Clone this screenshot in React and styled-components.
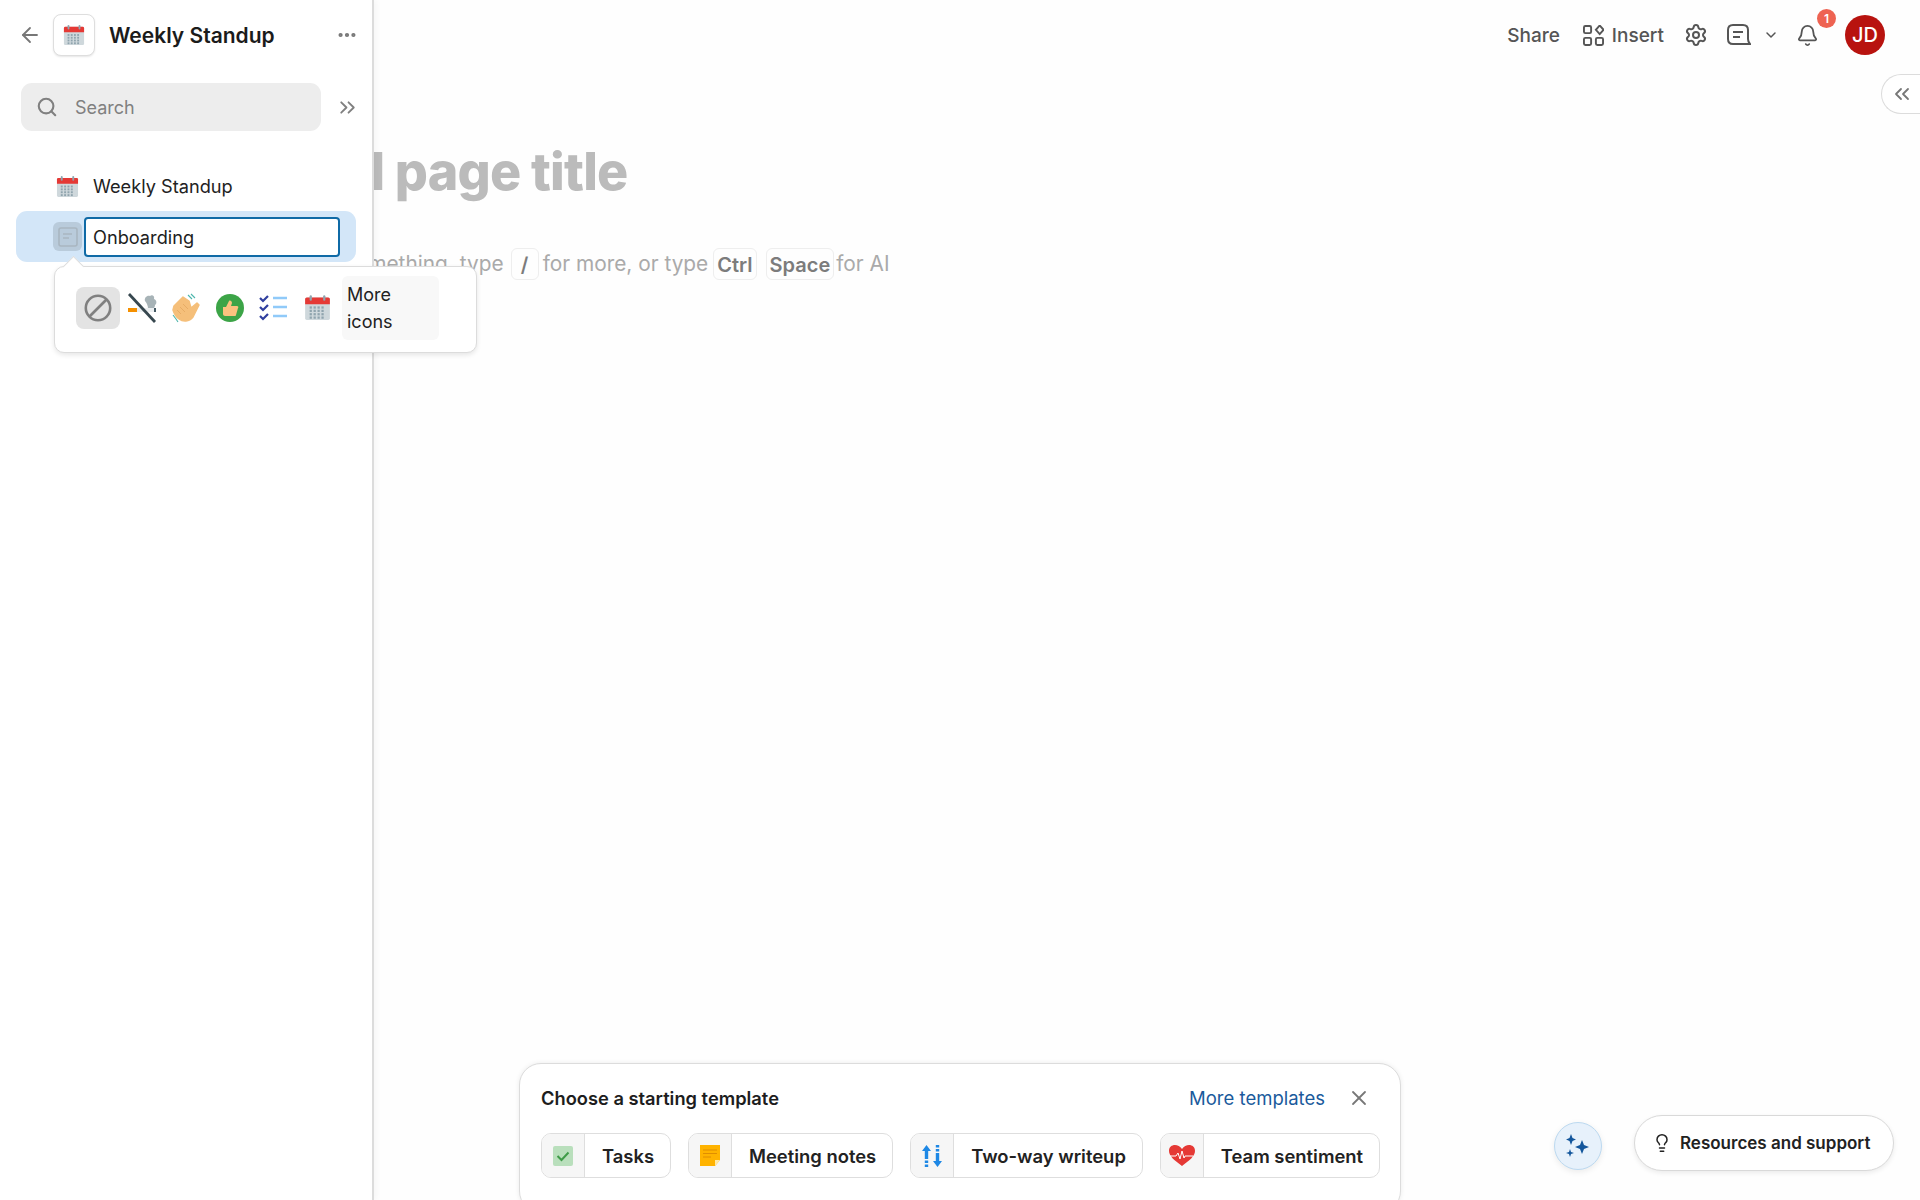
import React from "react";
import styled, { createGlobalStyle } from "styled-components";
import { ArrowLeft, Bell, ChevronDown, ChevronsLeft, ChevronsRight, Ellipsis, Lightbulb, Search, Settings, X } from "lucide-react";

const Global = createGlobalStyle`
  html, body { margin: 0; padding: 0; background: #fefefe; }
  body { font-family: Inter, "Noto Sans", sans-serif; color: #1d1d1d; }
  * { box-sizing: border-box; }
`;

const Page = styled.div`
  display: flex;
  width: 100%;
  height: 100vh;
  overflow: hidden;
  position: relative;
`;

const Sidebar = styled.aside`
  width: 374px;
  flex: none;
  background: #fff;
  border-right: 2px solid #dcdcdc;
  box-shadow: 2px 0 6px rgba(0, 0, 0, 0.04);
  position: relative;
  z-index: 2;
  padding: 14px 16px 0;
`;

const SideHeader = styled.div`
  display: flex;
  align-items: center;
  height: 42px;
  padding: 0 0 0 2px;
  color: #777;
`;

const HeaderIcon = styled.div`
  width: 42px;
  height: 42px;
  margin-left: 11px;
  border: 1px solid #dedede;
  border-radius: 8px;
  background: #fff;
  box-shadow: 0 1px 2px rgba(0, 0, 0, 0.1);
  display: flex;
  align-items: center;
  justify-content: center;
`;

const PageName = styled.div`
  flex: 1;
  margin-left: 14px;
  font-size: 21px;
  font-weight: 600;
  color: #1b1b1b;
`;

const DotsWrap = styled.div`
  display: flex;
  margin-right: -2px;
  color: #777;
`;

const SearchRow = styled.div`
  display: flex;
  align-items: center;
  margin-top: 27px;
  padding-left: 5px;
`;

const SearchBox = styled.div`
  width: 300px;
  height: 48px;
  flex: none;
  border-radius: 11px;
  background: #ededed;
  display: flex;
  align-items: center;
  padding-left: 15px;
  gap: 17px;
  color: #808080;
  font-size: 18px;
`;

const ExpandBtn = styled.div`
  display: flex;
  flex: none;
  margin-left: 14px;
  color: #808080;
`;

const Tree = styled.div`
  margin-top: 32px;
`;

const TreeRow = styled.div`
  display: flex;
  align-items: center;
  height: 46px;
  padding-left: 40px;
  gap: 14px;
  font-size: 18.2px;
  color: #222;
`;

const ActiveRow = styled.div`
  position: relative;
  display: flex;
  align-items: center;
  height: 51px;
  margin-top: 2px;
  width: 340px;
  border-radius: 11px;
  background: #d3e6f8;
  padding-left: 37px;
`;

const IconSlot = styled.div`
  width: 29px;
  height: 29px;
  border-radius: 6px;
  background: #b9cbdb;
  display: flex;
  align-items: center;
  justify-content: center;
  flex: none;
`;

const NameInput = styled.div`
  width: 256px;
  height: 40px;
  margin-left: 2px;
  background: #fff;
  border: 2px solid #0f6aa6;
  border-radius: 4px;
  display: flex;
  align-items: center;
  padding-left: 7px;
  font-size: 18.2px;
  color: #1d1d1d;
`;

const Popover = styled.div`
  position: absolute;
  top: 55px;
  left: 38px;
  width: 423px;
  height: 87px;
  background: #fff;
  border: 1px solid #dcdcdc;
  border-radius: 10px;
  box-shadow: 0 2px 5px rgba(0, 0, 0, 0.1);
  display: flex;
  align-items: center;
  padding: 0 0 4px 21px;

  &::before {
    content: "";
    position: absolute;
    top: -8px;
    left: 11px;
    width: 14px;
    height: 14px;
    background: #fff;
    border-left: 1px solid #dcdcdc;
    border-top: 1px solid #dcdcdc;
    transform: rotate(45deg);
  }
`;

const IconChoice = styled.div`
  width: ${(p) => p.$w || 44}px;
  height: 42px;
  flex: none;
  display: flex;
  align-items: center;
  justify-content: center;
  border-radius: 8px;
  background: ${(p) => (p.$on ? "#e3e3e3" : "transparent")};
`;

const MoreIcons = styled.div`
  width: 97px;
  height: 64px;
  margin-left: 3px;
  background: #f8f8f8;
  border-radius: 6px;
  padding-left: 5px;
  font-size: 18px;
  line-height: 27px;
  color: #222;
  display: flex;
  align-items: center;
`;

const Main = styled.main`
  flex: 1;
  min-width: 0;
  display: flex;
  flex-direction: column;
  overflow: hidden;
`;

const TopBar = styled.div`
  display: flex;
  align-items: center;
  justify-content: flex-end;
  height: 70px;
  padding-right: 35px;
  color: #555;
  font-size: 19px;
  font-weight: 500;
  flex: none;
`;

const TopItem = styled.div`
  display: flex;
  align-items: center;
  gap: ${(p) => p.$gap || 0}px;
  margin-left: ${(p) => p.$ml || 0}px;
  position: relative;
`;

const Badge = styled.span`
  position: absolute;
  top: -15px;
  right: -17px;
  width: 19px;
  height: 19px;
  border-radius: 50%;
  background: #ee6352;
  color: #fff;
  font-size: 12px;
  font-weight: 600;
  display: flex;
  align-items: center;
  justify-content: center;
`;

const Avatar = styled.div`
  width: 40px;
  height: 40px;
  border-radius: 50%;
  background: #b8130f;
  color: #fff;
  font-size: 20px;
  font-weight: 500;
  margin-left: 26px;
  display: flex;
  align-items: center;
  justify-content: center;
`;

const CollapseTab = styled.div`
  position: absolute;
  top: 74px;
  right: -1px;
  width: 40px;
  height: 40px;
  border: 1px solid #dcdcdc;
  border-right: none;
  border-radius: 20px 0 0 20px;
  background: #fff;
  color: #777;
  display: flex;
  align-items: center;
  justify-content: center;
`;

const Editor = styled.div`
  margin-left: -86px;
  white-space: nowrap;
  flex: 1;
`;

const Title = styled.div`
  margin: 70px 0 0 -6px;
  font-size: 52px;
  line-height: 64px;
  font-weight: 800;
  letter-spacing: -0.8px;
  color: #bbb;
`;

const Hint = styled.div`
  margin: 43px 0 0 -1px;
  display: flex;
  align-items: center;
  font-size: 20.85px;
  color: #aaa;
  height: 32px;
`;

const Key = styled.span`
  height: 32px;
  padding: 2px 3px 0;
  min-width: 28px;
  margin: 2px ${(p) => p.$mr ?? 4}px 0 ${(p) => p.$ml ?? 7}px;
  border: 1px solid #eee;
  border-radius: 6px;
  color: #7c7c7c;
  font-size: 20px;
  font-weight: 600;
  display: flex;
  align-items: center;
  justify-content: center;
`;

const Footer = styled.div`
  flex: none;
  display: flex;
  align-items: flex-end;
  padding-left: 145px;
  height: 137px;
`;

const TemplateCard = styled.div`
  width: 882px;
  height: 150px;
  margin-bottom: -13px;
  flex: none;
  background: #fff;
  border: 1px solid #dcdcdc;
  border-radius: 22px;
  box-shadow: 0 0 5px rgba(0, 0, 0, 0.08);
  padding: 20px 21px 0;
`;

const CardHead = styled.div`
  display: flex;
  align-items: center;
  height: 28px;
  font-size: 18.3px;
  font-weight: 600;
`;

const CardTitle = styled.div`
  flex: 1;
`;

const MoreLink = styled.div`
  color: #1a5a9c;
  font-size: 18.5px;
  font-weight: 400;
`;

const CloseBtn = styled.div`
  display: flex;
  color: #777;
  margin: 0 8px 0 22px;
`;

const Templates = styled.div`
  display: flex;
  gap: 17px;
  margin-top: 21px;
`;

const TemplateBtn = styled.div`
  display: flex;
  flex: none;
  height: 45px;
  border: 1px solid #dedede;
  border-radius: 10px;
  overflow: hidden;
  background: #fff;
  font-size: 18.4px;
  font-weight: 600;
  color: #222;
  white-space: nowrap;
`;

const TemplateIcon = styled.div`
  width: 43px;
  flex: none;
  background: #f6f6f6;
  border-right: 1px solid #dedede;
  display: flex;
  align-items: center;
  justify-content: center;
`;

const TemplateLabel = styled.div`
  display: flex;
  align-items: center;
  padding: 0 16px 0 17px;
`;

const AiButton = styled.div`
  width: 48px;
  height: 48px;
  flex: none;
  margin: 0 0 30px 153px;
  border-radius: 50%;
  background: #e7f1fb;
  border: 1px solid #bcd9f0;
  box-shadow: 0 2px 6px rgba(0, 0, 0, 0.08);
  display: flex;
  align-items: center;
  justify-content: center;
`;

const HelpButton = styled.div`
  margin: 0 0 29px 32px;
  width: 260px;
  height: 56px;
  flex: none;
  border: 1px solid #d9d9d9;
  border-radius: 28px;
  background: #fff;
  box-shadow: 0 2px 5px rgba(0, 0, 0, 0.08);
  display: flex;
  align-items: center;
  padding-left: 17px;
  gap: 8px;
  font-size: 17px;
  font-weight: 600;
  color: #222;
`;

const Calendar = ({ size = 24 }) => (
  <svg width={size} height={size} viewBox="0 0 24 24">
    <rect x="1" y="3" width="22" height="20" rx="1.5" fill="#cfd8dc" />
    <path d="M1 9V4.5A1.5 1.5 0 0 1 2.500 3h19A1.500 1.500 0 0 1 23 4.500V9z" fill="#e53935" />
    <rect x="5" y="1" width="2" height="5" rx="1" fill="#90a4ae" />
    <rect x="17" y="1" width="2" height="5" rx="1" fill="#90a4ae" />
    {[11, 14, 17, 20].map((y) =>
      [5, 8.500, 12, 15.500].map((x) => <rect key={x + "-" + y} x={x} y={y} width="2" height="2" fill="#90a4ae" />)
    )}
  </svg>
);

const NoteOutline = () => (
  <svg width="22" height="22" viewBox="0 0 22 22" fill="none" stroke="#a9b6c1" strokeWidth="1.600">
    <rect x="2" y="2" width="18" height="18" rx="2" />
    <path d="M6 8h9M6 12h6" />
  </svg>
);

const NoIcon = () => (
  <svg width="28" height="28" viewBox="0 0 28 28" fill="none" stroke="#808080" strokeWidth="2.600">
    <circle cx="14" cy="14" r="12.200" />
    <path d="M5.500 22.500L22.500 5.500" />
  </svg>
);

const NoSmoking = () => (
  <svg width="30" height="30" viewBox="0 0 30 30">
    <path d="M18 8c-1-3 2-6 5-5 2-2 5 0 4 3 3 1 3 5 1 6 0 2-1 3-2 4h-5c0-3-1-6-3-8z" fill="#a7b3b7" />
    <rect x="1" y="15" width="9" height="4" fill="#f59000" />
    <rect x="10" y="15" width="18" height="4" fill="#eceff1" />
    <rect x="27" y="15" width="2" height="4" fill="#455a64" />
    <path d="M2 1l26 28" stroke="#37474f" strokeWidth="2.800" />
  </svg>
);

const Wave = () => (
  <svg width="30" height="30" viewBox="0 0 30 30">
    <path d="M3 13L12 4l6 4 2 7 6-5 2 2-6 12c-4 5-10 5-14 2-3-2-5-6-6-9z" fill="#f5bf7a" stroke="#f5bf7a" strokeWidth="1.500" strokeLinejoin="round" />
    <path d="M9 14l5 5M12 11l5 5M6 17l4 4" stroke="#e3a75f" strokeWidth="0.800" />
    <path d="M17 2l4 4M20 1l4 4M2 22l3 4M5 26l2 3" stroke="#4db6ac" strokeWidth="1.100" />
  </svg>
);

const ThumbUp = () => (
  <svg width="28" height="28" viewBox="0 0 28 28">
    <circle cx="14" cy="14" r="14" fill="#3ca447" />
    <path d="M7 13h3l3-6c1-1 3 0 3 2l-1 3h6c1 0 2 1 1 2l-2 7c0 1-1 1-2 1H9c-1 0-2-1-2-2z" fill="#fbc27f" />
  </svg>
);

const Checklist = () => (
  <svg width="30" height="28" viewBox="0 0 30 28" fill="none">
    <path d="M1 4l3 3 5-5M1 13l3 3 5-5M1 22l3 3 5-5" stroke="#303f9f" strokeWidth="2.200" />
    <path d="M14 4h14M14 13h14M14 22h14" stroke="#90caf9" strokeWidth="2.600" />
  </svg>
);

const TaskIcon = () => (
  <svg width="20" height="20" viewBox="0 0 20 20">
    <rect width="20" height="20" rx="2" fill="#b9dfbc" />
    <path d="M4.500 10l4 4 7-7.500" stroke="#3f9c48" strokeWidth="2" fill="none" />
  </svg>
);

const NoteIcon = () => (
  <svg width="20" height="21" viewBox="0 0 20 21">
    <path d="M0 0h20v15l-5 6H0z" fill="#ffb300" />
    <path d="M15 21v-6h5z" fill="#ffe9a8" />
    <path d="M3 5h14M3 8.500h14M3 12h8" stroke="#e08e00" strokeWidth="1" />
  </svg>
);

const TwoWay = () => (
  <svg width="20" height="22" viewBox="0 0 20 22" fill="#1e88e5">
    <path d="M4.500 0l4.500 6H6.200v8H2.800V6H0zM2.800 15.500h3.400v2.500H2.800zM2.800 19.500h3.400V22H2.800z" />
    <path d="M15.500 22L11 16h2.800V8h3.400v8H20zM13.800 6.500h3.400V4h-3.400zM13.800 2.500h3.400V0h-3.400z" />
  </svg>
);

const HeartIcon = () => (
  <svg width="26" height="22" viewBox="0 0 26 22">
    <path d="M13 21C5 15 0 11 0 6c0-7 9-8 13-2 4-6 13-5 13 2 0 5-5 9-13 15z" fill="#e53935" />
    <path d="M1 11h6l2-3 2 6 2-8 2 7 1-2h8" stroke="#fff" strokeWidth="1" fill="none" />
  </svg>
);

const Sparkles = () => (
  <svg width="26" height="26" viewBox="0 0 26 26" fill="#13569c">
    <path d="M17 7l2 5 5 2-5 2-2 5-2-5-5-2 5-2z" />
    <path d="M6 1l1.500 4L11 6.500 7.500 8 6 12 4.500 8 1 6.500 4.500 5z" />
    <path d="M5 16l1 3 3 1-3 1-1 3-1-3-3-1 3-1z" />
  </svg>
);

const InsertIcon = () => (
  <svg width="21" height="21" viewBox="0 0 22 22" fill="none" stroke="#555" strokeWidth="2">
    <rect x="1" y="1" width="7.500" height="7.500" rx="1.500" />
    <path d="M17.500 0.500l4 4.500-4 4.500-4-4.500z" />
    <rect x="1" y="13.500" width="7.500" height="7.500" rx="1.500" />
    <rect x="13.500" y="13.500" width="7.500" height="7.500" rx="1.500" />
  </svg>
);

const CommentIcon = () => (
  <svg width="24" height="22" viewBox="0 0 24 22" fill="none" stroke="#555" strokeWidth="2">
    <path d="M6 1h10c3 0 5 2 5 5v9c0 2 1 4 2 5H6c-3 0-5-2-5-5V6c0-3 2-5 5-5z" />
    <path d="M6 8h10M6 13h7" />
  </svg>
);

const templates = [
  { name: "Tasks", icon: <TaskIcon /> },
  { name: "Meeting notes", icon: <NoteIcon /> },
  { name: "Two-way writeup", icon: <TwoWay /> },
  { name: "Team sentiment", icon: <HeartIcon /> },
];

export default function App() {
  return (
    <Page>
      <Global />
      <Sidebar>
        <SideHeader>
          <ArrowLeft size={24} strokeWidth={1.800} />
          <HeaderIcon><Calendar size={22} /></HeaderIcon>
          <PageName>Weekly Standup</PageName>
          <DotsWrap><Ellipsis size={22} strokeWidth={2.600} /></DotsWrap>
        </SideHeader>
        <SearchRow>
          <SearchBox>
            <Search size={22} strokeWidth={2.300} />
            Search
          </SearchBox>
          <ExpandBtn><ChevronsRight size={25} strokeWidth={1.800} /></ExpandBtn>
        </SearchRow>
        <Tree>
          <TreeRow>
            <Calendar size={23} />
            Weekly Standup
          </TreeRow>
          <ActiveRow>
            <IconSlot><NoteOutline /></IconSlot>
            <NameInput>Onboarding</NameInput>
            <Popover>
              <IconChoice $on><NoIcon /></IconChoice>
              <IconChoice><NoSmoking /></IconChoice>
              <IconChoice><Wave /></IconChoice>
              <IconChoice><ThumbUp /></IconChoice>
              <IconChoice><Checklist /></IconChoice>
              <IconChoice $w={43}><Calendar size={27} /></IconChoice>
              <MoreIcons>More<br />icons</MoreIcons>
            </Popover>
          </ActiveRow>
        </Tree>
      </Sidebar>
      <Main>
        <TopBar>
          <TopItem>Share</TopItem>
          <TopItem $ml={23} $gap={8}><InsertIcon />Insert</TopItem>
          <TopItem $ml={20}><Settings size={24} strokeWidth={2} /></TopItem>
          <TopItem $ml={19}><CommentIcon /></TopItem>
          <TopItem $ml={12}><ChevronDown size={16} strokeWidth={2.200} /></TopItem>
          <TopItem $ml={17}>
            <Bell size={23} strokeWidth={1.900} />
            <Badge>1</Badge>
          </TopItem>
          <Avatar>JD</Avatar>
        </TopBar>
        <CollapseTab><ChevronsLeft size={24} strokeWidth={1.800} /></CollapseTab>
        <Editor>
          <Title>Add page title</Title>
          <Hint>
            Write something, type <Key>/</Key> for more, or type <Key $ml={5}>Ctrl</Key><Key $ml={5} $mr={2}>Space</Key> for AI
          </Hint>
        </Editor>
        <Footer>
          <TemplateCard>
            <CardHead>
              <CardTitle>Choose a starting template</CardTitle>
              <MoreLink>More templates</MoreLink>
              <CloseBtn><X size={24} strokeWidth={1.800} /></CloseBtn>
            </CardHead>
            <Templates>
              {templates.map((t) => (
                <TemplateBtn key={t.name}>
                  <TemplateIcon>{t.icon}</TemplateIcon>
                  <TemplateLabel>{t.name}</TemplateLabel>
                </TemplateBtn>
              ))}
            </Templates>
          </TemplateCard>
          <AiButton><Sparkles /></AiButton>
          <HelpButton>
            <Lightbulb size={20} strokeWidth={1.800} />
            Resources and support
          </HelpButton>
        </Footer>
      </Main>
    </Page>
  );
}
